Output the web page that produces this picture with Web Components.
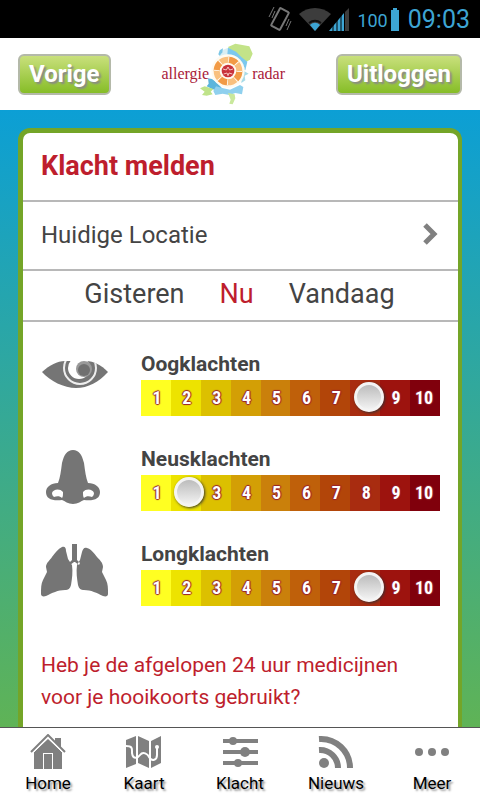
<!DOCTYPE html>
<html lang="nl">
<head>
<meta charset="utf-8">
<meta name="viewport" content="width=device-width, initial-scale=1">
<title>Allergieradar – Klacht melden</title>
<style>
  body { margin: 0; font-family: Roboto, "Noto Sans", sans-serif; color: #444; }
</style>
</head>
<body>
<allergy-app>
  <status-bar slot="status" battery="100" time="09:03"></status-bar>
  <app-header slot="header">
    <green-button slot="start">Vorige</green-button>
    <radar-logo></radar-logo>
    <green-button slot="end">Uitloggen</green-button>
  </app-header>
  <complaint-card heading="Klacht melden">
    <location-link slot="location">Huidige Locatie</location-link>
    <day-picker slot="day"></day-picker>
    <severity-field icon="eye" label="Oogklachten" value="8"></severity-field>
    <severity-field icon="nose" label="Neusklachten" value="2"></severity-field>
    <severity-field icon="lungs" label="Longklachten" value="8"></severity-field>
    <span slot="question">Heb je de afgelopen 24 uur medicijnen voor je hooikoorts gebruikt?</span>
  </complaint-card>
  <tab-bar slot="tabs">
    <tab-item icon="home">Home</tab-item>
    <tab-item icon="map">Kaart</tab-item>
    <tab-item icon="sliders">Klacht</tab-item>
    <tab-item icon="feed">Nieuws</tab-item>
    <tab-item icon="more">Meer</tab-item>
  </tab-bar>
</allergy-app>

<script>
const ICONS = {
  eye: `<svg width="68" height="32" viewBox="0 0 68 32"><clipPath id="lid"><path d="M1 13C9 6 16 2 24 2h21c8 0 15 4 22 11-9 10-20 16-32 16S9 22 1 13z"/></clipPath><g clip-path="url(#lid)"><path fill="#757575" d="M0 0h68v32H0z"/><circle cx="39" cy="9" r="16" fill="none" stroke="#eee" stroke-width="2"/><circle cx="38" cy="9" r="11" fill="#fff"/><circle cx="43" cy="10" r="8" fill="#999"/><circle cx="43" cy="11" r="6" fill="#707070"/></g></svg>`,
  nose: `<svg width="56" height="56" viewBox="0 0 56 56"><path fill="#757575" d="M28 1c6 0 9 5 11 13 1 8 2 15 4 20 7 0 12 4 12 9 0 7-6 9-16 8-3 1-6 4-11 4s-8-3-11-4C7 52 1 50 1 43c0-5 5-9 12-9 2-5 3-12 4-20C19 6 22 1 28 1z"/><path fill="#fff" d="M7 44c1-4 8-5 11-1 0 3 0 5-1 6-2-2-5-2-8-1-1-1-2-2-2-4zM49 44c-1-4-8-5-11-1 0 3 0 5 1 6 2-2 5-2 8-1 1-1 2-2 2-4z"/></svg>`,
  lungs: `<svg width="68" height="54" viewBox="0 0 68 54"><path fill="#757575" d="M31 0h5v16l3 3-1 2-4-3h-1l-4 3-1-2 3-3zM21 3c3-1 4 1 4 4l2 8 4 6c1 7 0 14-1 20-1 4-3 5-6 5-7 0-13 3-19 6-3 1-5 0-5-2 0-6 0-10 2-14l4-8-1-5c0-4 4-7 6-10 3-4 6-8 10-10zM46 4c-3-1-4 1-5 4l-2 8-3 5c-1 7 0 14 1 20 1 4 3 5 6 5 7 0 13 3 19 6 3 1 5 0 5-2 0-6 0-10-2-14l-4-8 1-5c0-4-3-7-6-10-3-4-6-8-10-9z"/></svg>`,
  chevron: `<svg width="18" height="26" viewBox="0 0 18 26"><path fill="none" stroke="#808080" stroke-width="5" d="M3 3l9 9-9 9"/></svg>`,
  home: `<svg width="36" height="36" viewBox="0 0 36 36"><path fill="#808080" fill-rule="evenodd" d="M18 5l14 13v17H4V18zM13 35h1V20h8v15h1V19H13zM25 4h6v10l-6-6z"/><path fill="none" stroke="#fff" d="M2 20L18 4l16 16"/><path fill="none" stroke="#808080" stroke-width="2" d="M1 18L18 1l17 17"/></svg>`,
  map: `<svg width="36" height="34" viewBox="0 0 36 34"><path fill="#808080" d="M0 5l10-4v28L0 33zM12 1l11 5v27l-11-5zM25 6l10-5v27l-10 5z"/><path fill="none" stroke="#fff" stroke-width="2" d="M0 11c7 0 6 3 6 7 1 7 6 5 8 2 3-4 8-1 9 2 3 5 8 3 8-2V12"/><circle cx="31" cy="12" r="2" fill="#fff"/></svg>`,
  sliders: `<svg width="36" height="30" viewBox="0 0 36 30"><path stroke="#808080" stroke-width="4" d="M1 4h35M1 15h35M1 26h35"/><g fill="#808080"><circle cx="11" cy="4" r="4"/><circle cx="23" cy="15" r="5"/><circle cx="16" cy="26" r="4"/></g></svg>`,
  feed: `<svg width="36" height="34" viewBox="0 0 36 34"><g fill="none" stroke="#808080" stroke-width="6"><path d="M1 4a29 29 0 0 1 31 29M1 15a18 18 0 0 1 19 18"/></g><circle cx="6" cy="28" r="5" fill="#808080"/></svg>`,
  more: `<svg width="36" height="10" viewBox="0 0 36 10"><g fill="#808080"><circle cx="5" cy="5" r="4"/><circle cx="18" cy="5" r="4"/><circle cx="31" cy="5" r="4"/></g></svg>`
};

class Base extends HTMLElement {
  connectedCallback() {
    if (this.shadowRoot) return;
    this.attachShadow({ mode: "open" }).innerHTML =
      `<style>:host{box-sizing:border-box} svg{display:block;flex:none} button{font-family:inherit;cursor:pointer}</style>` + this.render();
  }
}
const define = (name, render) =>
  customElements.define(name, class extends Base { render() { return render(this); } });

define("allergy-app", () => `
  <style>
    :host { display: flex; flex-direction: column; height: 100vh; background: #fff; }
    main { flex: 1; min-height: 0; overflow: hidden; padding: 18px 18px 0;
      background: linear-gradient(#0c9fd5, #5fb356); }
  </style>
  <slot name="status"></slot><slot name="header"></slot>
  <main><slot></slot></main>
  <slot name="tabs"></slot>`);

define("status-bar", el => `
  <style>
    :host { display: flex; align-items: center; justify-content: flex-end; height: 38px; flex: none;
      padding: 0 10px; background: #000; color: #3da5d4; font-size: 18px; }
    .vibrate { margin-right: 7px; } .signal { margin: 0 8px 0 -2px; }
    .battery { margin: 0 9px 0 3px; } .time { font-size: 25px; line-height: 38px; padding-top: 2px; }
    .level { padding-top: 2px; }
  </style>
  <svg class="vibrate" width="24" height="26" viewBox="0 0 24 26"><g fill="none" stroke="#777"><rect x="7" y="3" width="10" height="20" rx="1" stroke-width="2" transform="rotate(28 12 13)"/><path d="M1 11l5-10M4 12l3-7M18 20l3-7M19 24l4-9"/></g></svg>
  <svg width="32" height="24" viewBox="0 0 32 24"><path fill="#3c3c3c" d="M0 7C9-1 23-1 32 7L16 24z"/><path fill="#3da5d4" d="M11 18c3-3 7-3 10 0l-5 6z"/><path stroke="#111" stroke-width="2" fill="none" d="M10 16c4-3 8-3 12 0"/></svg>
  <svg class="signal" width="20" height="23" viewBox="0 0 20 23"><path fill="#3da5d4" d="M15 5v18H0z"/><path fill="#3c3c3c" d="M16 4l4-4v23h-4z"/><path stroke="#000" d="M4 12v11M8 8v15M12 4v19"/></svg>
  <span class="level">${el.getAttribute("battery")}</span>
  <svg class="battery" width="8" height="23" viewBox="0 0 8 23"><path fill="#3da5d4" d="M2 0h4v2h2v21H0V2h2z"/></svg>
  <span class="time">${el.getAttribute("time")}</span>`);

define("app-header", () => `
  <style>
    :host { display: flex; flex: none; align-items: center; justify-content: space-between; height: 72px;
      padding: 0 18px; background: #fff; }
  </style>
  <slot name="start"></slot><slot></slot><slot name="end"></slot>`);

define("green-button", () => `
  <style>
    :host { display: block; }
    button { display: block; height: 41px; padding: 0 9px; border: 2px solid #b4b9a9; border-radius: 6px;
      background: linear-gradient(#c9e07c, #86bd27); color: #fff; font-size: 24px; font-weight: 700;
      line-height: 36px; text-shadow: 2px 2px 2px #888; }
  </style>
  <button type="button"><slot></slot></button>`);

define("radar-logo", () => `
  <style>
    :host { display: flex; align-items: center; color: #a92038; font-family: "Liberation Serif", serif; font-size: 16px; }
    svg { margin: 0 -2px 0 -9px; }
    span { position: relative; }
  </style>
  <span>allergie</span>
  <svg width="54" height="62" viewBox="0 0 162 186" aria-hidden="true">
    <path fill="#d9eef3" d="M58 30l12-10 20-8 14 40-42 20z"/>
    <path fill="#7cc6e6" d="M55 34l4-12 10-6-2 12-8 10z"/>
    <path fill="#c3e388" d="M84 12l22-10 42 8 10 22-8 18-14 8-18-16-22-14z"/>
    <path fill="#7cc8ee" d="M84 14l24 12 16 16 18 14-6 26-18-14-22-20-14-14z"/>
    <path fill="#a8dbe8" d="M126 76l10-4-4 12 14 8-12 6 2 14-12 8z"/>
    <path fill="#5bb5dc" d="M24 106l12 2 16 12 16 18-12 6-20-6-16-8 6-8z"/>
    <path fill="#bfe38a" d="M0 136l14-6 26 8-8 8 6 8-18 4-14-2 8-10z"/>
    <path fill="#8fd0ee" d="M48 130l22 6 20 4 30-14 10 6-4 22-20-4-18 6-20-4-22 4-6-12z"/>
    <path fill="#c9e89c" d="M84 150l20 4 2 12-8 18-10-2 4-12z"/>
    <circle cx="84" cy="84" r="50" fill="#fffaf0"/>
    <circle cx="84" cy="84" r="34" fill="none" stroke="#f9c07e" stroke-width="18"/>
    <circle cx="84" cy="84" r="34" fill="none" stroke="#f29a45" stroke-width="18" pathLength="80" stroke-dasharray="10 10"/>
    <circle cx="84" cy="84" r="34" fill="none" stroke="#fffaf0" stroke-width="18" pathLength="80" stroke-dasharray="1 9"/>
    <circle cx="84" cy="84" r="19" fill="#c9323c"/>
    <path stroke="#f3c4c0" stroke-width="3" fill="none" d="M69 78l10 3 5-9 5 9 10-3M71 93l10-3 3 8 3-8 10 3"/>
  </svg>
  <span>radar</span>`);

define("complaint-card", el => `
  <style>
    :host { display: block; min-height: 100%; background: #fff; border: solid #74a528; border-width: 5px 4px 0 5px;
      border-radius: 12px 12px 0 0; }
    h1 { margin: 0; padding: 0 18px; font-size: 27px; line-height: 67px; color: #be1e2d; border-bottom: 2px solid #b8b8b8; }
    .fields { display: grid; gap: 29px; padding: 28px 18px 0; }
    p { margin: 0; padding: 43px 18px 0; font-size: 21px; line-height: 32px; color: #be1e2d; }
  </style>
  <h1>${el.getAttribute("heading")}</h1>
  <slot name="location"></slot><slot name="day"></slot>
  <div class="fields"><slot></slot></div>
  <p><slot name="question"></slot></p>`);

define("location-link", () => `
  <style>
    :host { display: block; border-bottom: 2px solid #b8b8b8; }
    a { display: flex; align-items: center; justify-content: space-between; height: 65px; padding: 0 18px 2px;
      color: inherit; text-decoration: none; font-size: 24px; }
  </style>
  <a href="#locatie"><slot></slot>${ICONS.chevron}</a>`);

define("day-picker", () => `
  <style>
    :host { display: flex; justify-content: center; gap: 35px; height: 51px; padding-right: 2px; border-bottom: 2px solid #b8b8b8; }
    button { border: 0; padding: 0; background: none; color: #444; font-size: 27px; line-height: 44px; height: 46px; }
    [aria-pressed=true] { color: #be1e2d; }
  </style>
  <button type="button" aria-pressed="false">Gisteren</button>
  <button type="button" aria-pressed="true">Nu</button>
  <button type="button" aria-pressed="false">Vandaag</button>`);

const SHADES = ["#ffff22", "#ede300", "#dcc000", "#d39f05", "#ca800b", "#bf600a", "#b24509", "#a82c10", "#9d130e", "#80000c"];
define("severity-field", el => `
  <style>
    :host { display: grid; grid-template-columns: 68px 1fr; column-gap: 32px; height: 66px; }
    .icon { display: flex; justify-content: center; align-items: flex-start; padding-top: 9px; }
    .icon.nose, .icon.lungs { padding-top: 4px; }
    .icon.nose svg { margin-right: 4px; }
    label { display: block; font-size: 21px; font-weight: 700; line-height: 28px; padding-bottom: 2px; }
    .track { display: grid; }
    .scale, input { grid-area: 1 / 1; }
    .scale { display: grid; grid-template-columns: repeat(10, 1fr); height: 36px; color: #fff;
      font: 700 18px/35px "Liberation Sans Narrow", "Roboto Condensed", Roboto, sans-serif; text-align: center;
      text-shadow: 1px 0 1px #98202c, -1px 0 1px #98202c, 0 1px 1px #98202c, 0 -1px 1px #98202c; }
    .scale span { padding-left: 2px; }
    .scale span:last-child { padding: 0 2px 0 0; }
    input { appearance: none; -webkit-appearance: none; margin: 0 -4px 0 3px; min-width: 0; height: 34px; background: none; outline-offset: 2px; }
    input::-webkit-slider-thumb { -webkit-appearance: none; width: 30px; height: 30px; border-radius: 50%;
      border: 3px solid #f4f4f4; background: linear-gradient(#bcbcbc, #f2f2f2); box-shadow: 1px 1px 3px #333; box-sizing: border-box; }
  </style>
  <div class="icon ${el.getAttribute("icon")}">${ICONS[el.getAttribute("icon")]}</div>
  <div>
    <label for="level">${el.getAttribute("label")}</label>
    <div class="track">
      <div class="scale" aria-hidden="true">${SHADES.map((c, i) =>
        `<span style="background:${c}">${i + 1 === +el.getAttribute("value") ? "" : i + 1}</span>`).join("")}</div>
      <input id="level" type="range" min="1" max="10" value="${el.getAttribute("value")}">
    </div>
  </div>`);

define("tab-bar", () => `
  <style>
    :host { display: grid; grid-template-columns: repeat(5, 1fr); flex: none; height: 73px; background: #fff;
      border-top: 1px solid #555; }
  </style><slot></slot>`);

define("tab-item", el => `
  <style>
    :host { display: block; }
    a { display: block; color: #000; text-decoration: none; text-align: center; font-size: 17px; line-height: 22px;
      text-shadow: 2px 2px 2px #999; }
    .icon { display: flex; align-items: center; justify-content: center; height: 38px; padding: 5px 0 1px; box-sizing: content-box; }
  </style>
  <a href="#${el.getAttribute("icon")}"><span class="icon">${ICONS[el.getAttribute("icon")]}</span><slot></slot></a>`);
</script>
</body>
</html>
